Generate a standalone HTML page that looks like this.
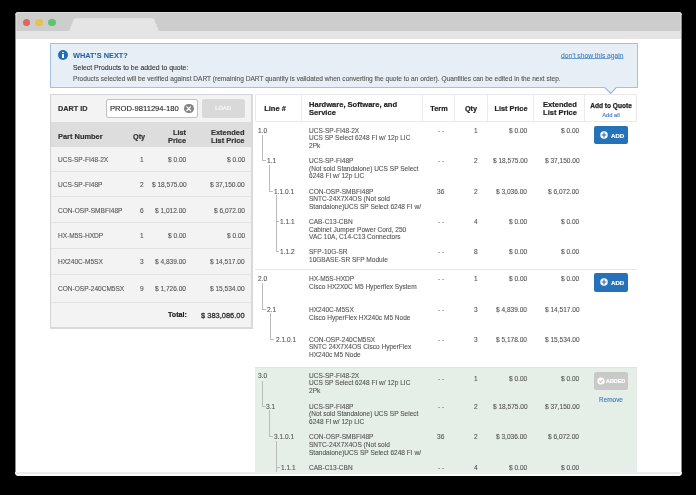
<!DOCTYPE html>
<html><head><meta charset="utf-8"><style>
html,body{margin:0;padding:0;}
body{width:696px;height:495px;background:#000;position:relative;overflow:hidden;font-family:"Liberation Sans", sans-serif;}
.r{position:absolute;}
.t{position:absolute;white-space:nowrap;will-change:transform;}
</style></head><body>
<div class="r" style="left:0;top:0;width:696px;height:495px;clip-path:inset(12px 14px 19px 15px round 4px);">
<div class="r" style="left:15.00px;top:12.00px;width:667.00px;height:464.00px;background:#fff;"></div>
<div class="r" style="left:15.00px;top:12.00px;width:667.00px;height:19.00px;background:#cdcdcd;"></div>
<div class="r" style="left:15.00px;top:12.00px;width:667.00px;height:1.00px;background:#dcdcdc;"></div>
<div class="r" style="left:15.00px;top:31.00px;width:667.00px;height:8.00px;background:#e5e5e5;"></div>
<svg class="r" style="left:0;top:0" width="200" height="40"><path d="M69.3 30.8 L73.6 19.4 Q74.2 18.2 75.6 18.2 L152.4 18.2 Q153.8 18.2 154.3 19.4 L159.3 32 L68.8 32 Z" fill="#e5e5e5"/></svg>
<div class="r" style="left:22.5px;top:18.5px;width:7.6px;height:7.6px;border-radius:50%;background:#e0675c;"></div>
<div class="r" style="left:35.400000000000006px;top:18.5px;width:7.6px;height:7.6px;border-radius:50%;background:#e6c44b;"></div>
<div class="r" style="left:48.2px;top:18.5px;width:7.6px;height:7.6px;border-radius:50%;background:#5ac76c;"></div>
<div class="r" style="left:50.40px;top:43.00px;width:587.60px;height:44.60px;background:#e8eef6;border:1px solid #a2c1e1;box-sizing:border-box;"></div>
<svg class="r" style="left:600px;top:80px" width="22" height="16"><path d="M4.6 5 L4.6 7.4 L10.6 13.5 L16.6 7.4 L16.6 5 Z" fill="#e8eef6"/><path d="M4.6 7.4 L10.6 13.5 L16.6 7.4" fill="none" stroke="#97b9de" stroke-width="1.2"/></svg>
<div class="r" style="left:58.2px;top:50.0px;width:10px;height:10px;border-radius:50%;background:#1f6db5;"></div>
<div class="r" style="left:62.45px;top:53.8px;width:1.5px;height:3.8px;background:#fff;"></div>
<div class="r" style="left:62.400000000000006px;top:51.6px;width:1.6px;height:1.5px;background:#fff;border-radius:50%;"></div>
<div class="t" style="left:73.20px;top:51.78px;font-size:7.4px;line-height:7.4px;font-weight:700;color:#1f64a8;-webkit-text-stroke:0.05px #1f64a8;">WHAT&#8217;S NEXT?</div>
<div class="t" style="left:73.00px;top:65.07px;font-size:6.9px;line-height:6.9px;font-weight:400;color:#333;-webkit-text-stroke:0.1px #333;">Select Products to be added to quote:</div>
<div class="t" style="left:73.00px;top:76.02px;font-size:6.59px;line-height:6.59px;font-weight:400;color:#555;-webkit-text-stroke:0.1px #555;">Products selected will be verified against DART (remaining DART quantity is validated when converting the quote to an order). Quantities can be edited in the next step.</div>
<div class="t" style="left:561.00px;top:52.68px;font-size:6.69px;line-height:6.69px;font-weight:400;color:#3f7fc2;-webkit-text-stroke:0.1px #3f7fc2;text-decoration:underline;text-decoration-thickness:0.5px;text-underline-offset:0.3px;text-decoration-color:#6d9fd3;">don&#8217;t show this again</div>
<div class="r" style="left:50.00px;top:94.00px;width:203.00px;height:235.00px;background:#f3f3f3;border:1px solid #d4d4d4;border-right:2px solid #d9d9d9;border-bottom:2px solid #d9d9d9;box-sizing:border-box;border-radius:1px;"></div>
<div class="r" style="left:51.00px;top:122.00px;width:200.00px;height:24.70px;background:#dddddd;"></div>
<div class="r" style="left:51.00px;top:171.30px;width:200.00px;height:1.00px;background:#e2e2e2;"></div>
<div class="r" style="left:51.00px;top:196.00px;width:200.00px;height:1.00px;background:#e2e2e2;"></div>
<div class="r" style="left:51.00px;top:221.80px;width:200.00px;height:1.00px;background:#e2e2e2;"></div>
<div class="r" style="left:51.00px;top:247.80px;width:200.00px;height:1.00px;background:#e2e2e2;"></div>
<div class="r" style="left:51.00px;top:274.30px;width:200.00px;height:1.00px;background:#e2e2e2;"></div>
<div class="r" style="left:51.00px;top:301.90px;width:200.00px;height:1.00px;background:#e2e2e2;"></div>
<div class="t" style="left:57.60px;top:105.30px;font-size:7.27px;line-height:7.27px;font-weight:700;color:#333;-webkit-text-stroke:0.2px #333;">DART ID</div>
<div class="r" style="left:106.20px;top:99.40px;width:91.80px;height:18.20px;background:#fff;border:1px solid #c2c2c2;border-radius:2px;box-sizing:border-box;"></div>
<div class="t" style="left:109.90px;top:104.83px;font-size:7.62px;line-height:7.62px;font-weight:400;color:#222;-webkit-text-stroke:0.1px #222;">PROD-9811294-180</div>
<div class="r" style="left:184.3px;top:103.7px;width:9.4px;height:9.4px;border-radius:50%;background:#858585;"></div>
<svg class="r" style="left:184.3px;top:103.7px" width="9.4" height="9.4"><path d="M2.9 2.9 L6.5 6.5 M6.5 2.9 L2.9 6.5" stroke="#fff" stroke-width="1.3" stroke-linecap="round"/></svg>
<div class="r" style="left:202.00px;top:99.40px;width:42.60px;height:18.20px;background:#d9d9d9;border-radius:2.5px;"></div>
<div class="t" style="left:73.10px;width:300px;text-align:center;top:106.24px;font-size:5.72px;line-height:5.72px;font-weight:700;color:#f4f4f4;-webkit-text-stroke:0.2px #f4f4f4;">LOAD</div>
<div class="t" style="left:58.20px;top:132.81px;font-size:7.45px;line-height:7.45px;font-weight:700;color:#333;-webkit-text-stroke:0.2px #333;">Part Number</div>
<div class="t" style="right:550.90px;text-align:right;top:132.88px;font-size:7.3px;line-height:7.3px;font-weight:700;color:#333;-webkit-text-stroke:0.2px #333;">Qty</div>
<div class="t" style="right:509.80px;text-align:right;top:129.16px;font-size:7.35px;line-height:7.35px;font-weight:700;color:#333;-webkit-text-stroke:0.2px #333;">List</div>
<div class="t" style="right:509.80px;text-align:right;top:136.76px;font-size:7.35px;line-height:7.35px;font-weight:700;color:#333;-webkit-text-stroke:0.2px #333;">Price</div>
<div class="t" style="right:451.30px;text-align:right;top:129.11px;font-size:7.45px;line-height:7.45px;font-weight:700;color:#333;-webkit-text-stroke:0.2px #333;">Extended</div>
<div class="t" style="right:451.30px;text-align:right;top:136.71px;font-size:7.45px;line-height:7.45px;font-weight:700;color:#333;-webkit-text-stroke:0.2px #333;">List Price</div>
<div class="t" style="left:58.00px;top:156.89px;font-size:6.55px;line-height:6.55px;font-weight:400;color:#555;-webkit-text-stroke:0.1px #555;">UCS-SP-FI48-2X</div>
<div class="t" style="right:552.60px;text-align:right;top:156.89px;font-size:6.55px;line-height:6.55px;font-weight:400;color:#555;-webkit-text-stroke:0.1px #555;">1</div>
<div class="t" style="right:509.80px;text-align:right;top:156.89px;font-size:6.55px;line-height:6.55px;font-weight:400;color:#555;-webkit-text-stroke:0.1px #555;">$ 0.00</div>
<div class="t" style="right:451.30px;text-align:right;top:156.89px;font-size:6.55px;line-height:6.55px;font-weight:400;color:#555;-webkit-text-stroke:0.1px #555;">$ 0.00</div>
<div class="t" style="left:58.00px;top:182.49px;font-size:6.55px;line-height:6.55px;font-weight:400;color:#555;-webkit-text-stroke:0.1px #555;">UCS-SP-FI48P</div>
<div class="t" style="right:552.60px;text-align:right;top:182.49px;font-size:6.55px;line-height:6.55px;font-weight:400;color:#555;-webkit-text-stroke:0.1px #555;">2</div>
<div class="t" style="right:509.80px;text-align:right;top:182.49px;font-size:6.55px;line-height:6.55px;font-weight:400;color:#555;-webkit-text-stroke:0.1px #555;">$ 18,575.00</div>
<div class="t" style="right:451.30px;text-align:right;top:182.49px;font-size:6.55px;line-height:6.55px;font-weight:400;color:#555;-webkit-text-stroke:0.1px #555;">$ 37,150.00</div>
<div class="t" style="left:58.00px;top:208.09px;font-size:6.55px;line-height:6.55px;font-weight:400;color:#555;-webkit-text-stroke:0.1px #555;">CON-OSP-SMBFI48P</div>
<div class="t" style="right:552.60px;text-align:right;top:208.09px;font-size:6.55px;line-height:6.55px;font-weight:400;color:#555;-webkit-text-stroke:0.1px #555;">6</div>
<div class="t" style="right:509.80px;text-align:right;top:208.09px;font-size:6.55px;line-height:6.55px;font-weight:400;color:#555;-webkit-text-stroke:0.1px #555;">$ 1,012.00</div>
<div class="t" style="right:451.30px;text-align:right;top:208.09px;font-size:6.55px;line-height:6.55px;font-weight:400;color:#555;-webkit-text-stroke:0.1px #555;">$ 6,072.00</div>
<div class="t" style="left:58.00px;top:233.09px;font-size:6.55px;line-height:6.55px;font-weight:400;color:#555;-webkit-text-stroke:0.1px #555;">HX-M5S-HXDP</div>
<div class="t" style="right:552.60px;text-align:right;top:233.09px;font-size:6.55px;line-height:6.55px;font-weight:400;color:#555;-webkit-text-stroke:0.1px #555;">1</div>
<div class="t" style="right:509.80px;text-align:right;top:233.09px;font-size:6.55px;line-height:6.55px;font-weight:400;color:#555;-webkit-text-stroke:0.1px #555;">$ 0.00</div>
<div class="t" style="right:451.30px;text-align:right;top:233.09px;font-size:6.55px;line-height:6.55px;font-weight:400;color:#555;-webkit-text-stroke:0.1px #555;">$ 0.00</div>
<div class="t" style="left:58.00px;top:259.09px;font-size:6.55px;line-height:6.55px;font-weight:400;color:#555;-webkit-text-stroke:0.1px #555;">HX240C-M5SX</div>
<div class="t" style="right:552.60px;text-align:right;top:259.09px;font-size:6.55px;line-height:6.55px;font-weight:400;color:#555;-webkit-text-stroke:0.1px #555;">3</div>
<div class="t" style="right:509.80px;text-align:right;top:259.09px;font-size:6.55px;line-height:6.55px;font-weight:400;color:#555;-webkit-text-stroke:0.1px #555;">$ 4,839.00</div>
<div class="t" style="right:451.30px;text-align:right;top:259.09px;font-size:6.55px;line-height:6.55px;font-weight:400;color:#555;-webkit-text-stroke:0.1px #555;">$ 14,517.00</div>
<div class="t" style="left:58.00px;top:285.69px;font-size:6.55px;line-height:6.55px;font-weight:400;color:#555;-webkit-text-stroke:0.1px #555;">CON-OSP-240CM5SX</div>
<div class="t" style="right:552.60px;text-align:right;top:285.69px;font-size:6.55px;line-height:6.55px;font-weight:400;color:#555;-webkit-text-stroke:0.1px #555;">9</div>
<div class="t" style="right:509.80px;text-align:right;top:285.69px;font-size:6.55px;line-height:6.55px;font-weight:400;color:#555;-webkit-text-stroke:0.1px #555;">$ 1,726.00</div>
<div class="t" style="right:451.30px;text-align:right;top:285.69px;font-size:6.55px;line-height:6.55px;font-weight:400;color:#555;-webkit-text-stroke:0.1px #555;">$ 15,534.00</div>
<div class="t" style="right:509.30px;text-align:right;top:311.86px;font-size:7.14px;line-height:7.14px;font-weight:700;color:#222;-webkit-text-stroke:0.2px #222;">Total:</div>
<div class="t" style="right:451.30px;text-align:right;top:311.69px;font-size:7.48px;line-height:7.48px;font-weight:400;color:#333;-webkit-text-stroke:0.3px #333;">$ 383,086.00</div>
<div class="r" style="left:254.60px;top:94.10px;width:382.10px;height:27.50px;background:#fff;border:1px solid #e9e9e9;box-sizing:border-box;border-radius:1px;"></div>
<div class="r" style="left:300.80px;top:94.50px;width:1.00px;height:27.00px;background:#ebebeb;"></div>
<div class="r" style="left:422.10px;top:94.50px;width:1.00px;height:27.00px;background:#ebebeb;"></div>
<div class="r" style="left:454.00px;top:94.50px;width:1.00px;height:27.00px;background:#ebebeb;"></div>
<div class="r" style="left:486.70px;top:94.50px;width:1.00px;height:27.00px;background:#ebebeb;"></div>
<div class="r" style="left:533.30px;top:94.50px;width:1.00px;height:27.00px;background:#ebebeb;"></div>
<div class="r" style="left:584.30px;top:94.50px;width:1.00px;height:27.00px;background:#ebebeb;"></div>
<div class="t" style="left:125.40px;width:300px;text-align:center;top:105.19px;font-size:7.5px;line-height:7.5px;font-weight:700;color:#222;-webkit-text-stroke:0.2px #222;">Line #</div>
<div class="t" style="left:309.00px;top:100.76px;font-size:7.55px;line-height:7.55px;font-weight:700;color:#222;-webkit-text-stroke:0.2px #222;">Hardware, Software, and</div>
<div class="t" style="left:309.00px;top:108.96px;font-size:7.55px;line-height:7.55px;font-weight:700;color:#222;-webkit-text-stroke:0.2px #222;">Service</div>
<div class="t" style="left:288.60px;width:300px;text-align:center;top:105.28px;font-size:7.3px;line-height:7.3px;font-weight:700;color:#222;-webkit-text-stroke:0.2px #222;">Term</div>
<div class="t" style="left:320.90px;width:300px;text-align:center;top:105.28px;font-size:7.3px;line-height:7.3px;font-weight:700;color:#222;-webkit-text-stroke:0.2px #222;">Qty</div>
<div class="t" style="left:361.00px;width:300px;text-align:center;top:105.26px;font-size:7.35px;line-height:7.35px;font-weight:700;color:#222;-webkit-text-stroke:0.2px #222;">List Price</div>
<div class="t" style="left:410.00px;width:300px;text-align:center;top:100.79px;font-size:7.5px;line-height:7.5px;font-weight:700;color:#222;-webkit-text-stroke:0.2px #222;">Extended</div>
<div class="t" style="left:410.00px;width:300px;text-align:center;top:109.19px;font-size:7.5px;line-height:7.5px;font-weight:700;color:#222;-webkit-text-stroke:0.2px #222;">List Price</div>
<div class="t" style="left:460.70px;width:300px;text-align:center;top:102.82px;font-size:6.59px;line-height:6.59px;font-weight:700;color:#222;-webkit-text-stroke:0.25px #222;">Add to Quote</div>
<div class="t" style="left:460.80px;width:300px;text-align:center;top:112.71px;font-size:5.79px;line-height:5.79px;font-weight:400;color:#3a78bd;-webkit-text-stroke:0.1px #3a78bd;">Add all</div>
<div class="r" style="left:254.60px;top:268.90px;width:382.10px;height:1.00px;background:#e6e6e6;"></div>
<div class="r" style="left:254.60px;top:366.60px;width:382.10px;height:113.40px;background:#e5eee7;border-top:1px solid #dbe4dd;box-sizing:border-box;"></div>
<div class="t" style="left:258.00px;top:127.84px;font-size:6.55px;line-height:6.55px;font-weight:400;color:#555;-webkit-text-stroke:0.1px #555;">1.0</div>
<div class="t" style="left:309.00px;top:127.84px;font-size:6.55px;line-height:6.55px;font-weight:400;color:#555;-webkit-text-stroke:0.1px #555;">UCS-SP-FI48-2X</div>
<div class="t" style="left:309.00px;top:135.44px;font-size:6.55px;line-height:6.55px;font-weight:400;color:#555;-webkit-text-stroke:0.1px #555;">UCS SP Select 6248 FI w/ 12p LIC</div>
<div class="t" style="left:309.00px;top:143.04px;font-size:6.55px;line-height:6.55px;font-weight:400;color:#555;-webkit-text-stroke:0.1px #555;">2Pk</div>
<div class="t" style="right:251.40px;text-align:right;top:127.84px;font-size:6.55px;line-height:6.55px;font-weight:400;color:#555;-webkit-text-stroke:0.1px #555;">- -</div>
<div class="t" style="right:218.80px;text-align:right;top:127.84px;font-size:6.55px;line-height:6.55px;font-weight:400;color:#555;-webkit-text-stroke:0.1px #555;">1</div>
<div class="t" style="right:168.60px;text-align:right;top:127.84px;font-size:6.55px;line-height:6.55px;font-weight:400;color:#555;-webkit-text-stroke:0.1px #555;">$ 0.00</div>
<div class="t" style="right:116.60px;text-align:right;top:127.84px;font-size:6.55px;line-height:6.55px;font-weight:400;color:#555;-webkit-text-stroke:0.1px #555;">$ 0.00</div>
<div class="t" style="left:266.70px;top:158.14px;font-size:6.55px;line-height:6.55px;font-weight:400;color:#555;-webkit-text-stroke:0.1px #555;">1.1</div>
<div class="t" style="left:309.00px;top:158.14px;font-size:6.55px;line-height:6.55px;font-weight:400;color:#555;-webkit-text-stroke:0.1px #555;">UCS-SP-FI48P</div>
<div class="t" style="left:309.00px;top:165.74px;font-size:6.55px;line-height:6.55px;font-weight:400;color:#555;-webkit-text-stroke:0.1px #555;">(Not sold Standalone) UCS SP Select</div>
<div class="t" style="left:309.00px;top:173.34px;font-size:6.55px;line-height:6.55px;font-weight:400;color:#555;-webkit-text-stroke:0.1px #555;">6248 FI w/ 12p LIC</div>
<div class="t" style="right:251.40px;text-align:right;top:158.14px;font-size:6.55px;line-height:6.55px;font-weight:400;color:#555;-webkit-text-stroke:0.1px #555;">- -</div>
<div class="t" style="right:218.80px;text-align:right;top:158.14px;font-size:6.55px;line-height:6.55px;font-weight:400;color:#555;-webkit-text-stroke:0.1px #555;">2</div>
<div class="t" style="right:168.60px;text-align:right;top:158.14px;font-size:6.55px;line-height:6.55px;font-weight:400;color:#555;-webkit-text-stroke:0.1px #555;">$ 18,575.00</div>
<div class="t" style="right:116.60px;text-align:right;top:158.14px;font-size:6.55px;line-height:6.55px;font-weight:400;color:#555;-webkit-text-stroke:0.1px #555;">$ 37,150.00</div>
<div class="t" style="left:274.30px;top:188.54px;font-size:6.55px;line-height:6.55px;font-weight:400;color:#555;-webkit-text-stroke:0.1px #555;">1.1.0.1</div>
<div class="t" style="left:309.00px;top:188.54px;font-size:6.55px;line-height:6.55px;font-weight:400;color:#555;-webkit-text-stroke:0.1px #555;">CON-OSP-SMBFI48P</div>
<div class="t" style="left:309.00px;top:196.14px;font-size:6.55px;line-height:6.55px;font-weight:400;color:#555;-webkit-text-stroke:0.1px #555;">SNTC-24X7X4OS (Not sold</div>
<div class="t" style="left:309.00px;top:203.74px;font-size:6.55px;line-height:6.55px;font-weight:400;color:#555;-webkit-text-stroke:0.1px #555;">Standalone)UCS SP Select 6248 FI w/</div>
<div class="t" style="right:251.40px;text-align:right;top:188.54px;font-size:6.55px;line-height:6.55px;font-weight:400;color:#555;-webkit-text-stroke:0.1px #555;">36</div>
<div class="t" style="right:218.80px;text-align:right;top:188.54px;font-size:6.55px;line-height:6.55px;font-weight:400;color:#555;-webkit-text-stroke:0.1px #555;">2</div>
<div class="t" style="right:168.60px;text-align:right;top:188.54px;font-size:6.55px;line-height:6.55px;font-weight:400;color:#555;-webkit-text-stroke:0.1px #555;">$ 3,036.00</div>
<div class="t" style="right:116.60px;text-align:right;top:188.54px;font-size:6.55px;line-height:6.55px;font-weight:400;color:#555;-webkit-text-stroke:0.1px #555;">$ 6,072.00</div>
<div class="t" style="left:280.30px;top:219.14px;font-size:6.55px;line-height:6.55px;font-weight:400;color:#555;-webkit-text-stroke:0.1px #555;">1.1.1</div>
<div class="t" style="left:309.00px;top:219.14px;font-size:6.55px;line-height:6.55px;font-weight:400;color:#555;-webkit-text-stroke:0.1px #555;">CAB-C13-CBN</div>
<div class="t" style="left:309.00px;top:226.74px;font-size:6.55px;line-height:6.55px;font-weight:400;color:#555;-webkit-text-stroke:0.1px #555;">Cabinet Jumper Power Cord, 250</div>
<div class="t" style="left:309.00px;top:234.34px;font-size:6.55px;line-height:6.55px;font-weight:400;color:#555;-webkit-text-stroke:0.1px #555;">VAC 10A, C14-C13 Connectors</div>
<div class="t" style="right:251.40px;text-align:right;top:219.14px;font-size:6.55px;line-height:6.55px;font-weight:400;color:#555;-webkit-text-stroke:0.1px #555;">- -</div>
<div class="t" style="right:218.80px;text-align:right;top:219.14px;font-size:6.55px;line-height:6.55px;font-weight:400;color:#555;-webkit-text-stroke:0.1px #555;">4</div>
<div class="t" style="right:168.60px;text-align:right;top:219.14px;font-size:6.55px;line-height:6.55px;font-weight:400;color:#555;-webkit-text-stroke:0.1px #555;">$ 0.00</div>
<div class="t" style="right:116.60px;text-align:right;top:219.14px;font-size:6.55px;line-height:6.55px;font-weight:400;color:#555;-webkit-text-stroke:0.1px #555;">$ 0.00</div>
<div class="t" style="left:280.30px;top:248.94px;font-size:6.55px;line-height:6.55px;font-weight:400;color:#555;-webkit-text-stroke:0.1px #555;">1.1.2</div>
<div class="t" style="left:309.00px;top:248.94px;font-size:6.55px;line-height:6.55px;font-weight:400;color:#555;-webkit-text-stroke:0.1px #555;">SFP-10G-SR</div>
<div class="t" style="left:309.00px;top:256.54px;font-size:6.55px;line-height:6.55px;font-weight:400;color:#555;-webkit-text-stroke:0.1px #555;">10GBASE-SR SFP Module</div>
<div class="t" style="right:251.40px;text-align:right;top:248.94px;font-size:6.55px;line-height:6.55px;font-weight:400;color:#555;-webkit-text-stroke:0.1px #555;">- -</div>
<div class="t" style="right:218.80px;text-align:right;top:248.94px;font-size:6.55px;line-height:6.55px;font-weight:400;color:#555;-webkit-text-stroke:0.1px #555;">8</div>
<div class="t" style="right:168.60px;text-align:right;top:248.94px;font-size:6.55px;line-height:6.55px;font-weight:400;color:#555;-webkit-text-stroke:0.1px #555;">$ 0.00</div>
<div class="t" style="right:116.60px;text-align:right;top:248.94px;font-size:6.55px;line-height:6.55px;font-weight:400;color:#555;-webkit-text-stroke:0.1px #555;">$ 0.00</div>
<div class="r" style="left:261.80px;top:135.00px;width:1.00px;height:25.60px;background:#bbbbbb;"></div>
<div class="r" style="left:262.30px;top:160.10px;width:3.50px;height:1.00px;background:#bbbbbb;"></div>
<div class="r" style="left:268.90px;top:165.00px;width:1.00px;height:26.00px;background:#bbbbbb;"></div>
<div class="r" style="left:269.40px;top:190.50px;width:4.00px;height:1.00px;background:#bbbbbb;"></div>
<div class="r" style="left:275.70px;top:195.30px;width:1.00px;height:56.10px;background:#bbbbbb;"></div>
<div class="r" style="left:276.20px;top:221.10px;width:3.20px;height:1.00px;background:#bbbbbb;"></div>
<div class="r" style="left:276.20px;top:250.90px;width:3.20px;height:1.00px;background:#bbbbbb;"></div>
<div class="t" style="left:258.00px;top:276.24px;font-size:6.55px;line-height:6.55px;font-weight:400;color:#555;-webkit-text-stroke:0.1px #555;">2.0</div>
<div class="t" style="left:309.00px;top:276.24px;font-size:6.55px;line-height:6.55px;font-weight:400;color:#555;-webkit-text-stroke:0.1px #555;">HX-M5S-HXDP</div>
<div class="t" style="left:309.00px;top:283.84px;font-size:6.55px;line-height:6.55px;font-weight:400;color:#555;-webkit-text-stroke:0.1px #555;">Cisco HX2X0C M5 Hyperflex System</div>
<div class="t" style="right:251.40px;text-align:right;top:276.24px;font-size:6.55px;line-height:6.55px;font-weight:400;color:#555;-webkit-text-stroke:0.1px #555;">- -</div>
<div class="t" style="right:218.80px;text-align:right;top:276.24px;font-size:6.55px;line-height:6.55px;font-weight:400;color:#555;-webkit-text-stroke:0.1px #555;">1</div>
<div class="t" style="right:168.60px;text-align:right;top:276.24px;font-size:6.55px;line-height:6.55px;font-weight:400;color:#555;-webkit-text-stroke:0.1px #555;">$ 0.00</div>
<div class="t" style="right:116.60px;text-align:right;top:276.24px;font-size:6.55px;line-height:6.55px;font-weight:400;color:#555;-webkit-text-stroke:0.1px #555;">$ 0.00</div>
<div class="t" style="left:266.70px;top:307.04px;font-size:6.55px;line-height:6.55px;font-weight:400;color:#555;-webkit-text-stroke:0.1px #555;">2.1</div>
<div class="t" style="left:309.00px;top:307.04px;font-size:6.55px;line-height:6.55px;font-weight:400;color:#555;-webkit-text-stroke:0.1px #555;">HX240C-M5SX</div>
<div class="t" style="left:309.00px;top:314.64px;font-size:6.55px;line-height:6.55px;font-weight:400;color:#555;-webkit-text-stroke:0.1px #555;">Cisco HyperFlex HX240c M5 Node</div>
<div class="t" style="right:251.40px;text-align:right;top:307.04px;font-size:6.55px;line-height:6.55px;font-weight:400;color:#555;-webkit-text-stroke:0.1px #555;">- -</div>
<div class="t" style="right:218.80px;text-align:right;top:307.04px;font-size:6.55px;line-height:6.55px;font-weight:400;color:#555;-webkit-text-stroke:0.1px #555;">3</div>
<div class="t" style="right:168.60px;text-align:right;top:307.04px;font-size:6.55px;line-height:6.55px;font-weight:400;color:#555;-webkit-text-stroke:0.1px #555;">$ 4,839.00</div>
<div class="t" style="right:116.60px;text-align:right;top:307.04px;font-size:6.55px;line-height:6.55px;font-weight:400;color:#555;-webkit-text-stroke:0.1px #555;">$ 14,517.00</div>
<div class="t" style="left:275.50px;top:336.84px;font-size:6.55px;line-height:6.55px;font-weight:400;color:#555;-webkit-text-stroke:0.1px #555;">2.1.0.1</div>
<div class="t" style="left:309.00px;top:336.84px;font-size:6.55px;line-height:6.55px;font-weight:400;color:#555;-webkit-text-stroke:0.1px #555;">CON-OSP-240CM5SX</div>
<div class="t" style="left:309.00px;top:344.44px;font-size:6.55px;line-height:6.55px;font-weight:400;color:#555;-webkit-text-stroke:0.1px #555;">SNTC 24X7X4OS Cisco HyperFlex</div>
<div class="t" style="left:309.00px;top:352.04px;font-size:6.55px;line-height:6.55px;font-weight:400;color:#555;-webkit-text-stroke:0.1px #555;">HX240c M5 Node</div>
<div class="t" style="right:251.40px;text-align:right;top:336.84px;font-size:6.55px;line-height:6.55px;font-weight:400;color:#555;-webkit-text-stroke:0.1px #555;">- -</div>
<div class="t" style="right:218.80px;text-align:right;top:336.84px;font-size:6.55px;line-height:6.55px;font-weight:400;color:#555;-webkit-text-stroke:0.1px #555;">3</div>
<div class="t" style="right:168.60px;text-align:right;top:336.84px;font-size:6.55px;line-height:6.55px;font-weight:400;color:#555;-webkit-text-stroke:0.1px #555;">$ 5,178.00</div>
<div class="t" style="right:116.60px;text-align:right;top:336.84px;font-size:6.55px;line-height:6.55px;font-weight:400;color:#555;-webkit-text-stroke:0.1px #555;">$ 15,534.00</div>
<div class="r" style="left:261.90px;top:283.40px;width:1.00px;height:26.10px;background:#bbbbbb;"></div>
<div class="r" style="left:262.40px;top:309.00px;width:3.40px;height:1.00px;background:#bbbbbb;"></div>
<div class="r" style="left:269.50px;top:313.40px;width:1.00px;height:25.90px;background:#bbbbbb;"></div>
<div class="r" style="left:270.00px;top:338.80px;width:3.80px;height:1.00px;background:#bbbbbb;"></div>
<div class="t" style="left:258.00px;top:372.64px;font-size:6.55px;line-height:6.55px;font-weight:400;color:#555;-webkit-text-stroke:0.1px #555;">3.0</div>
<div class="t" style="left:309.00px;top:372.64px;font-size:6.55px;line-height:6.55px;font-weight:400;color:#555;-webkit-text-stroke:0.1px #555;">UCS-SP-FI48-2X</div>
<div class="t" style="left:309.00px;top:380.24px;font-size:6.55px;line-height:6.55px;font-weight:400;color:#555;-webkit-text-stroke:0.1px #555;">UCS SP Select 6248 FI w/ 12p LIC</div>
<div class="t" style="left:309.00px;top:387.84px;font-size:6.55px;line-height:6.55px;font-weight:400;color:#555;-webkit-text-stroke:0.1px #555;">2Pk</div>
<div class="t" style="right:251.40px;text-align:right;top:375.64px;font-size:6.55px;line-height:6.55px;font-weight:400;color:#555;-webkit-text-stroke:0.1px #555;">- -</div>
<div class="t" style="right:218.80px;text-align:right;top:375.64px;font-size:6.55px;line-height:6.55px;font-weight:400;color:#555;-webkit-text-stroke:0.1px #555;">1</div>
<div class="t" style="right:168.60px;text-align:right;top:375.64px;font-size:6.55px;line-height:6.55px;font-weight:400;color:#555;-webkit-text-stroke:0.1px #555;">$ 0.00</div>
<div class="t" style="right:116.60px;text-align:right;top:375.64px;font-size:6.55px;line-height:6.55px;font-weight:400;color:#555;-webkit-text-stroke:0.1px #555;">$ 0.00</div>
<div class="t" style="left:266.20px;top:403.84px;font-size:6.55px;line-height:6.55px;font-weight:400;color:#555;-webkit-text-stroke:0.1px #555;">3.1</div>
<div class="t" style="left:309.00px;top:403.84px;font-size:6.55px;line-height:6.55px;font-weight:400;color:#555;-webkit-text-stroke:0.1px #555;">UCS-SP-FI48P</div>
<div class="t" style="left:309.00px;top:411.44px;font-size:6.55px;line-height:6.55px;font-weight:400;color:#555;-webkit-text-stroke:0.1px #555;">(Not sold Standalone) UCS SP Select</div>
<div class="t" style="left:309.00px;top:419.04px;font-size:6.55px;line-height:6.55px;font-weight:400;color:#555;-webkit-text-stroke:0.1px #555;">6248 FI w/ 12p LIC</div>
<div class="t" style="right:251.40px;text-align:right;top:403.84px;font-size:6.55px;line-height:6.55px;font-weight:400;color:#555;-webkit-text-stroke:0.1px #555;">- -</div>
<div class="t" style="right:218.80px;text-align:right;top:403.84px;font-size:6.55px;line-height:6.55px;font-weight:400;color:#555;-webkit-text-stroke:0.1px #555;">2</div>
<div class="t" style="right:168.60px;text-align:right;top:403.84px;font-size:6.55px;line-height:6.55px;font-weight:400;color:#555;-webkit-text-stroke:0.1px #555;">$ 18,575.00</div>
<div class="t" style="right:116.60px;text-align:right;top:403.84px;font-size:6.55px;line-height:6.55px;font-weight:400;color:#555;-webkit-text-stroke:0.1px #555;">$ 37,150.00</div>
<div class="t" style="left:273.80px;top:434.34px;font-size:6.55px;line-height:6.55px;font-weight:400;color:#555;-webkit-text-stroke:0.1px #555;">3.1.0.1</div>
<div class="t" style="left:309.00px;top:434.34px;font-size:6.55px;line-height:6.55px;font-weight:400;color:#555;-webkit-text-stroke:0.1px #555;">CON-OSP-SMBFI48P</div>
<div class="t" style="left:309.00px;top:441.94px;font-size:6.55px;line-height:6.55px;font-weight:400;color:#555;-webkit-text-stroke:0.1px #555;">SNTC-24X7X4OS (Not sold</div>
<div class="t" style="left:309.00px;top:449.54px;font-size:6.55px;line-height:6.55px;font-weight:400;color:#555;-webkit-text-stroke:0.1px #555;">Standalone)UCS SP Select 6248 FI w/</div>
<div class="t" style="right:251.40px;text-align:right;top:434.34px;font-size:6.55px;line-height:6.55px;font-weight:400;color:#555;-webkit-text-stroke:0.1px #555;">36</div>
<div class="t" style="right:218.80px;text-align:right;top:434.34px;font-size:6.55px;line-height:6.55px;font-weight:400;color:#555;-webkit-text-stroke:0.1px #555;">2</div>
<div class="t" style="right:168.60px;text-align:right;top:434.34px;font-size:6.55px;line-height:6.55px;font-weight:400;color:#555;-webkit-text-stroke:0.1px #555;">$ 3,036.00</div>
<div class="t" style="right:116.60px;text-align:right;top:434.34px;font-size:6.55px;line-height:6.55px;font-weight:400;color:#555;-webkit-text-stroke:0.1px #555;">$ 6,072.00</div>
<div class="t" style="left:280.60px;top:464.74px;font-size:6.55px;line-height:6.55px;font-weight:400;color:#555;-webkit-text-stroke:0.1px #555;">1.1.1</div>
<div class="t" style="left:309.00px;top:464.74px;font-size:6.55px;line-height:6.55px;font-weight:400;color:#555;-webkit-text-stroke:0.1px #555;">CAB-C13-CBN</div>
<div class="t" style="left:309.00px;top:472.34px;font-size:6.55px;line-height:6.55px;font-weight:400;color:#555;-webkit-text-stroke:0.1px #555;">Cabinet Jumper Power Cord, 250</div>
<div class="t" style="left:309.00px;top:479.94px;font-size:6.55px;line-height:6.55px;font-weight:400;color:#555;-webkit-text-stroke:0.1px #555;">VAC 10A, C14-C13 Connectors</div>
<div class="t" style="right:251.40px;text-align:right;top:464.74px;font-size:6.55px;line-height:6.55px;font-weight:400;color:#555;-webkit-text-stroke:0.1px #555;">- -</div>
<div class="t" style="right:218.80px;text-align:right;top:464.74px;font-size:6.55px;line-height:6.55px;font-weight:400;color:#555;-webkit-text-stroke:0.1px #555;">4</div>
<div class="t" style="right:168.60px;text-align:right;top:464.74px;font-size:6.55px;line-height:6.55px;font-weight:400;color:#555;-webkit-text-stroke:0.1px #555;">$ 0.00</div>
<div class="t" style="right:116.60px;text-align:right;top:464.74px;font-size:6.55px;line-height:6.55px;font-weight:400;color:#555;-webkit-text-stroke:0.1px #555;">$ 0.00</div>
<div class="r" style="left:261.90px;top:380.60px;width:1.00px;height:25.70px;background:#bbbbbb;"></div>
<div class="r" style="left:262.40px;top:405.80px;width:3.20px;height:1.00px;background:#bbbbbb;"></div>
<div class="r" style="left:269.20px;top:410.40px;width:1.00px;height:26.40px;background:#bbbbbb;"></div>
<div class="r" style="left:269.70px;top:436.30px;width:3.50px;height:1.00px;background:#bbbbbb;"></div>
<div class="r" style="left:275.90px;top:441.00px;width:1.00px;height:39.00px;background:#bbbbbb;"></div>
<div class="r" style="left:276.40px;top:466.70px;width:3.40px;height:1.00px;background:#bbbbbb;"></div>
<div class="r" style="left:593.80px;top:126.30px;width:34.30px;height:18.00px;background:#2672b8;border-radius:2px;"></div>
<svg class="r" style="left:599.7px;top:131.20000000000002px" width="8" height="8"><circle cx="4" cy="4" r="3.75" fill="#fff"/><path d="M4 1.6 V6.4 M1.6 4 H6.4" stroke="#2672b8" stroke-width="1.15"/></svg>
<div class="t" style="left:611.40px;top:132.66px;font-size:6.1px;line-height:6.1px;font-weight:700;color:#fff;-webkit-text-stroke:0.2px #fff;">ADD</div>
<div class="r" style="left:593.80px;top:273.20px;width:34.30px;height:18.60px;background:#2672b8;border-radius:2px;"></div>
<svg class="r" style="left:599.7px;top:278.4px" width="8" height="8"><circle cx="4" cy="4" r="3.75" fill="#fff"/><path d="M4 1.6 V6.4 M1.6 4 H6.4" stroke="#2672b8" stroke-width="1.15"/></svg>
<div class="t" style="left:611.40px;top:279.86px;font-size:6.1px;line-height:6.1px;font-weight:700;color:#fff;-webkit-text-stroke:0.2px #fff;">ADD</div>
<div class="r" style="left:593.90px;top:372.10px;width:34.10px;height:18.20px;background:#c9c9c9;border-radius:2px;"></div>
<svg class="r" style="left:596.7px;top:377.2px" width="8" height="8"><circle cx="4" cy="4" r="3.6" fill="#fff"/><path d="M2.2 4.0 L3.5 5.3 L5.9 2.7" stroke="#c9c9c9" stroke-width="1.25" fill="none"/></svg>
<div class="t" style="left:605.80px;top:378.90px;font-size:5.4px;line-height:5.4px;font-weight:700;color:#fff;-webkit-text-stroke:0.2px #fff;">ADDED</div>
<div class="t" style="left:460.90px;width:300px;text-align:center;top:397.01px;font-size:6.42px;line-height:6.42px;font-weight:400;color:#3a78bd;-webkit-text-stroke:0.1px #3a78bd;">Remove</div>
<div class="r" style="left:15.00px;top:472.40px;width:667.00px;height:1.60px;background:#ececec;"></div>
<div class="r" style="left:15.00px;top:474.00px;width:667.00px;height:2.00px;background:#fafafa;"></div>
<div class="r" style="left:16.00px;top:12.00px;width:1.00px;height:19.00px;background:#d8d8d8;"></div>
<div class="r" style="left:680.00px;top:12.00px;width:1.00px;height:19.00px;background:#d8d8d8;"></div>
<div class="r" style="left:15.00px;top:15.00px;width:1.00px;height:457.00px;background:#8c8c8c;"></div>
<div class="r" style="left:681.00px;top:15.00px;width:1.00px;height:457.00px;background:#8c8c8c;"></div>
</div>
</body></html>
